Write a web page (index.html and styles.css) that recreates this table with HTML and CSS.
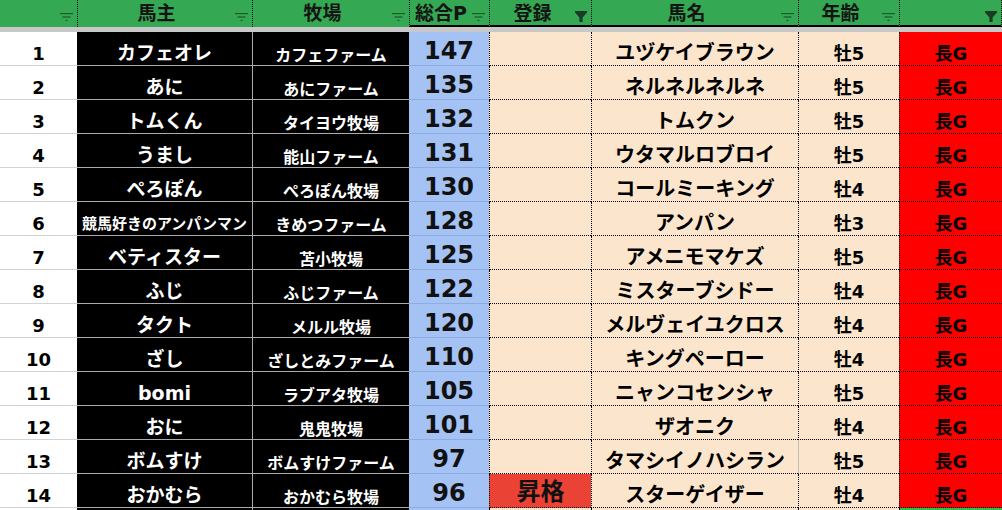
FILE: index.html
```html
<!DOCTYPE html>
<html lang="ja">
<head>
<meta charset="utf-8">
<title>ランキング</title>
<link rel="stylesheet" href="styles.css">
</head>
<body>
<div class="sheet">
  <div class="head">
    <div class="hc"><span class="lbl"></span><svg class="ico lite" width="13" height="8" viewBox="0 0 13 8"><rect x="0" y="0" width="13" height="1.2"/><rect x="2.5" y="3.4" width="8" height="1.2"/><rect x="5.5" y="6.8" width="2" height="1.2"/></svg></div>
    <div class="hc"><span class="lbl">馬主</span><svg class="ico lite" width="13" height="8" viewBox="0 0 13 8"><rect x="0" y="0" width="13" height="1.2"/><rect x="2.5" y="3.4" width="8" height="1.2"/><rect x="5.5" y="6.8" width="2" height="1.2"/></svg></div>
    <div class="hc"><span class="lbl">牧場</span><svg class="ico lite" width="13" height="8" viewBox="0 0 13 8"><rect x="0" y="0" width="13" height="1.2"/><rect x="2.5" y="3.4" width="8" height="1.2"/><rect x="5.5" y="6.8" width="2" height="1.2"/></svg></div>
    <div class="hc ul"><span class="lbl">総合P</span><svg class="ico lite" width="13" height="8" viewBox="0 0 13 8"><rect x="0" y="0" width="13" height="1.2"/><rect x="2.5" y="3.4" width="8" height="1.2"/><rect x="5.5" y="6.8" width="2" height="1.2"/></svg></div>
    <div class="hc ul"><span class="lbl">登録</span><svg class="ico funnel" width="12" height="11" viewBox="0 0 12 11"><path d="M0 0H12V1.6L7.6 6.4V11H4.4V6.4L0 1.6Z"/></svg></div>
    <div class="hc ul"><span class="lbl">馬名</span><svg class="ico lite" width="13" height="8" viewBox="0 0 13 8"><rect x="0" y="0" width="13" height="1.2"/><rect x="2.5" y="3.4" width="8" height="1.2"/><rect x="5.5" y="6.8" width="2" height="1.2"/></svg></div>
    <div class="hc ul"><span class="lbl">年齢</span><svg class="ico lite" width="13" height="8" viewBox="0 0 13 8"><rect x="0" y="0" width="13" height="1.2"/><rect x="2.5" y="3.4" width="8" height="1.2"/><rect x="5.5" y="6.8" width="2" height="1.2"/></svg></div>
    <div class="hc ul last"><span class="lbl"></span><svg class="ico funnel" width="12" height="11" viewBox="0 0 12 11"><path d="M0 0H12V1.6L7.6 6.4V11H4.4V6.4L0 1.6Z"/></svg></div>
  </div>

  <div class="row"><div class="c num">1</div><div class="c owner">カフェオレ</div><div class="c farm">カフェファーム</div><div class="c pts">147</div><div class="c reg"></div><div class="c horse">ユヅケイブラウン</div><div class="c age">牡5</div><div class="c grade">長G</div></div>
  <div class="row"><div class="c num">2</div><div class="c owner">あに</div><div class="c farm">あにファーム</div><div class="c pts">135</div><div class="c reg"></div><div class="c horse">ネルネルネルネ</div><div class="c age">牡5</div><div class="c grade">長G</div></div>
  <div class="row"><div class="c num">3</div><div class="c owner">トムくん</div><div class="c farm">タイヨウ牧場</div><div class="c pts">132</div><div class="c reg"></div><div class="c horse">トムクン</div><div class="c age">牡5</div><div class="c grade">長G</div></div>
  <div class="row"><div class="c num">4</div><div class="c owner">うまし</div><div class="c farm">能山ファーム</div><div class="c pts">131</div><div class="c reg"></div><div class="c horse">ウタマルロブロイ</div><div class="c age">牡5</div><div class="c grade">長G</div></div>
  <div class="row"><div class="c num">5</div><div class="c owner">ぺろぽん</div><div class="c farm">ぺろぽん牧場</div><div class="c pts">130</div><div class="c reg"></div><div class="c horse">コールミーキング</div><div class="c age">牡4</div><div class="c grade">長G</div></div>
  <div class="row"><div class="c num">6</div><div class="c owner long">競馬好きのアンパンマン</div><div class="c farm">きめつファーム</div><div class="c pts">128</div><div class="c reg"></div><div class="c horse">アンパン</div><div class="c age">牡3</div><div class="c grade">長G</div></div>
  <div class="row"><div class="c num">7</div><div class="c owner">ベティスター</div><div class="c farm">苫小牧場</div><div class="c pts">125</div><div class="c reg"></div><div class="c horse">アメニモマケズ</div><div class="c age">牡5</div><div class="c grade">長G</div></div>
  <div class="row"><div class="c num">8</div><div class="c owner">ふじ</div><div class="c farm">ふじファーム</div><div class="c pts">122</div><div class="c reg"></div><div class="c horse">ミスターブシドー</div><div class="c age">牡4</div><div class="c grade">長G</div></div>
  <div class="row"><div class="c num">9</div><div class="c owner">タクト</div><div class="c farm">メルル牧場</div><div class="c pts">120</div><div class="c reg"></div><div class="c horse">メルヴェイユクロス</div><div class="c age">牡4</div><div class="c grade">長G</div></div>
  <div class="row"><div class="c num">10</div><div class="c owner">ざし</div><div class="c farm">ざしとみファーム</div><div class="c pts">110</div><div class="c reg"></div><div class="c horse">キングペーロー</div><div class="c age">牡4</div><div class="c grade">長G</div></div>
  <div class="row"><div class="c num">11</div><div class="c owner">bomi</div><div class="c farm">ラブアタ牧場</div><div class="c pts">105</div><div class="c reg"></div><div class="c horse">ニャンコセンシャ</div><div class="c age">牡5</div><div class="c grade">長G</div></div>
  <div class="row"><div class="c num">12</div><div class="c owner">おに</div><div class="c farm">鬼鬼牧場</div><div class="c pts">101</div><div class="c reg"></div><div class="c horse">ザオニク</div><div class="c age">牡4</div><div class="c grade">長G</div></div>
  <div class="row"><div class="c num">13</div><div class="c owner">ボムすけ</div><div class="c farm">ボムすけファーム</div><div class="c pts">97</div><div class="c reg"></div><div class="c horse">タマシイノハシラン</div><div class="c age solid">牡5</div><div class="c grade">長G</div></div>
  <div class="row"><div class="c num">14</div><div class="c owner">おかむら</div><div class="c farm">おかむら牧場</div><div class="c pts">96</div><div class="c reg up">昇格</div><div class="c horse">スターゲイザー</div><div class="c age">牡4</div><div class="c grade">長G</div></div>
  <div class="row stub"><div class="c num"></div><div class="c owner"></div><div class="c farm"></div><div class="c pts"></div><div class="c reg"></div><div class="c horse"></div><div class="c age"></div><div class="c grade next"></div></div>
</div>
</body>
</html>
```

FILE: styles.css
```css
html, body {
  margin: 0;
  height: 510px;
  overflow: hidden;
  background: #fff;
}

body {
  font-family: "DejaVu Sans", "Noto Sans CJK JP", sans-serif;
  font-weight: 700;
  color: #000;
}

.sheet {
  width: 1002px;
}

.head,
.row {
  display: grid;
  grid-template-columns: 77px 175px 157px 80px 102px 207px 101px 103px;
}

.head {
  height: 27px;
  background: #34a853;
  border-bottom: 5px solid #c8c8c8;
}

.hc {
  display: flex;
  align-items: center;
  box-sizing: border-box;
  border-left: 1px dotted #000;
  padding-right: 4px;
}

.hc:first-child {
  border-left: none;
}

.hc.last {
  border-right: 1px dotted #000;
}

.hc.ul {
  box-shadow: inset 0 -2px 0 #000;
}

.lbl {
  flex: 1;
  text-align: center;
  font-size: 19px;
  line-height: 27px;
  color: #141414;
}

.ico {
  flex: none;
  align-self: flex-end;
}

.ico.lite {
  margin-bottom: 6px;
  fill: #1d5a2e;
}

.ico.funnel {
  margin-bottom: 5px;
  fill: #1a3b24;
}

.row {
  height: 34px;
}

.row.stub {
  height: 2px;
}

.c {
  display: flex;
  align-items: flex-end;
  justify-content: center;
  box-sizing: border-box;
  border-bottom: 1px solid transparent;
  line-height: 1.2;
  white-space: nowrap;
  overflow: hidden;
}

.stub .c {
  border-bottom: none;
}

.num {
  background: #fff;
  border-bottom-color: #d3d3d3;
  font-size: 18px;
}

.owner {
  background: #000;
  color: #fff;
  border-bottom-color: #ababab;
  font-size: 19px;
}

.owner.long {
  font-size: 15px;
  padding-bottom: 2px;
}

.farm {
  background: #000;
  color: #fff;
  border-bottom-color: #ababab;
  border-left: 1px solid #ababab;
  font-size: 16px;
}

.pts {
  background: #a4c2f4;
  border-bottom-color: #8eacdf;
  font-size: 24px;
  align-items: center;
  padding-top: 6px;
  color: #111;
}

.reg,
.horse,
.age,
.grade {
  border-left: 1px dotted #000;
  border-bottom: 1px dotted #000;
}

.reg {
  background: #fce5cd;
}

.reg.up {
  background: #ea4335;
  font-size: 24px;
  color: #111;
}

.horse {
  background: #fce5cd;
  font-size: 20px;
}

.age {
  background: #fce5cd;
  font-size: 18px;
}

.age.solid {
  border-left: 1px solid #bdbdbd;
}

.grade {
  background: #ff0000;
  font-size: 18px;
}

.grade.next {
  background: #2fc043;
}
```
